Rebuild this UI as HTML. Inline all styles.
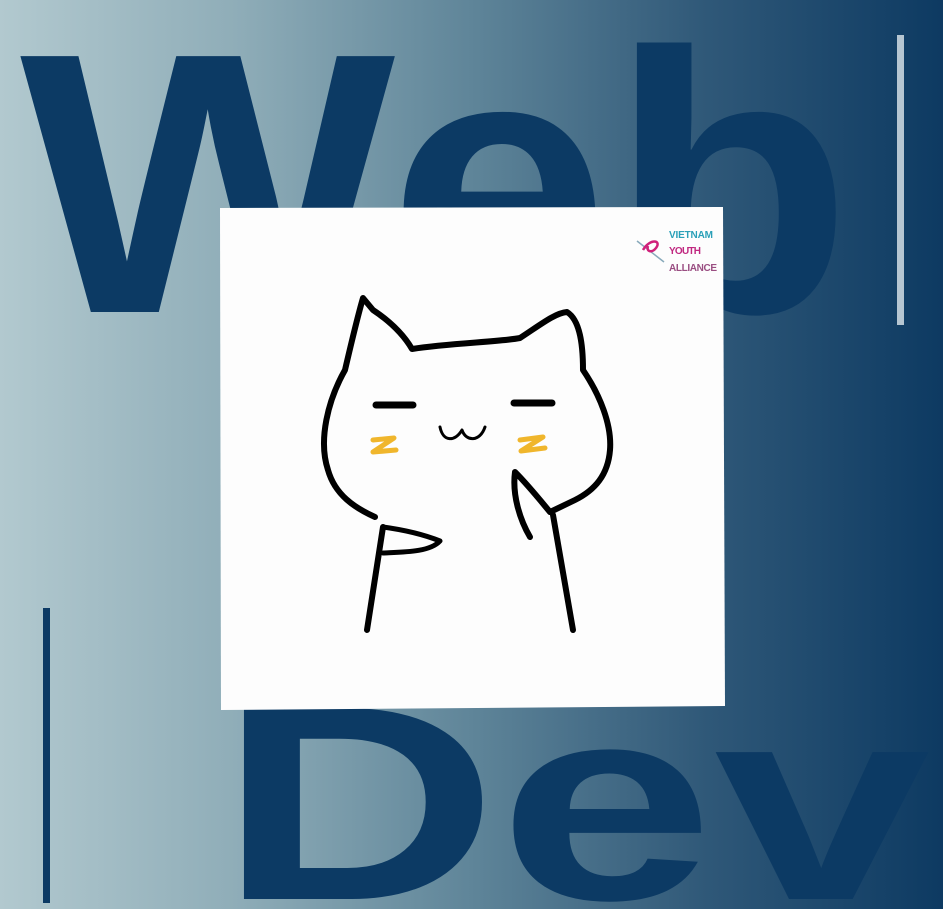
<!DOCTYPE html>
<html><head><meta charset="utf-8"><style>
html,body{margin:0;padding:0}
body{width:943px;height:909px;overflow:hidden;position:relative;background:linear-gradient(90deg,#b2c9cf 0%,#8fadb8 25%,#5f8599 50%,#2f5878 75%,#0d3a62 100%)}
svg{position:absolute;left:0;top:0;display:block}
</style></head><body>
<svg width="943" height="909" viewBox="0 0 943 909">
<text x="20" y="312" font-family="Liberation Sans, sans-serif" font-weight="bold" font-size="372" fill="#0c3a64" textLength="832" lengthAdjust="spacingAndGlyphs">Web</text>
<text x="218" y="899" font-family="Liberation Sans, sans-serif" font-weight="bold" font-size="278" fill="#0c3a64" textLength="712" lengthAdjust="spacingAndGlyphs">Dev</text>
<rect x="897" y="35" width="7" height="290" fill="#b6c6d2"/>
<rect x="43" y="608" width="7" height="295" fill="#0c3a64"/>
<polygon points="220,208 723,207 725,706 221,710" fill="#fdfdfd"/>
<g fill="none" stroke="#000" stroke-linecap="round" stroke-linejoin="round">
<path d="M375,517 C355,508 335,495 328,470 C318,440 328,400 345,370 C352,340 358,315 363,298 L373,310 C388,320 402,332 412,349 C450,343 500,342 520,338 C540,325 555,313 567,312 C580,320 583,345 583,370 C600,395 612,425 610,450 C608,475 595,490 575,500 L550,512" stroke-width="6"/>
<path d="M383,527 L367,630" stroke-width="6"/>
<path d="M383,527 C405,530 425,535 440,541 C430,552 405,552 383,553" stroke-width="5"/>
<path d="M553,515 L573,630" stroke-width="6"/>
<path d="M550,512 C540,500 528,485 515,472 C512,495 520,520 530,537" stroke-width="6"/>
<path d="M376,405 L413,405 M514,403 L552,403" stroke-width="7"/>
<path d="M440,427 C443,442 455,442 462,430 C466,442 480,442 485,427" stroke-width="3"/>
</g>
<g fill="none" stroke="#f0b62c" stroke-width="5" stroke-linecap="round" stroke-linejoin="round">
<path d="M373,440 L394,438 L373,452 L396,450"/>
<path d="M520,440 L543,437 L521,451 L545,448"/>
</g>
<g>
<path d="M637,241 L664,262" stroke="#8ab" stroke-width="1.5"/>
<path d="M643,250 C650,238 662,240 656,248 C652,253 646,252 648,246" stroke="#d0207a" stroke-width="2.5" fill="none"/>
<text x="669" y="238" font-family="Liberation Sans, sans-serif" font-weight="bold" font-size="10" fill="#2aa0b8" textLength="44">VIETNAM</text>
<text x="669" y="254" font-family="Liberation Sans, sans-serif" font-weight="bold" font-size="10" fill="#c02880" textLength="32">YOUTH</text>
<text x="669" y="271" font-family="Liberation Sans, sans-serif" font-weight="bold" font-size="10" fill="#9a4e82" textLength="48">ALLIANCE</text>
</g>
</svg>
</body></html>
